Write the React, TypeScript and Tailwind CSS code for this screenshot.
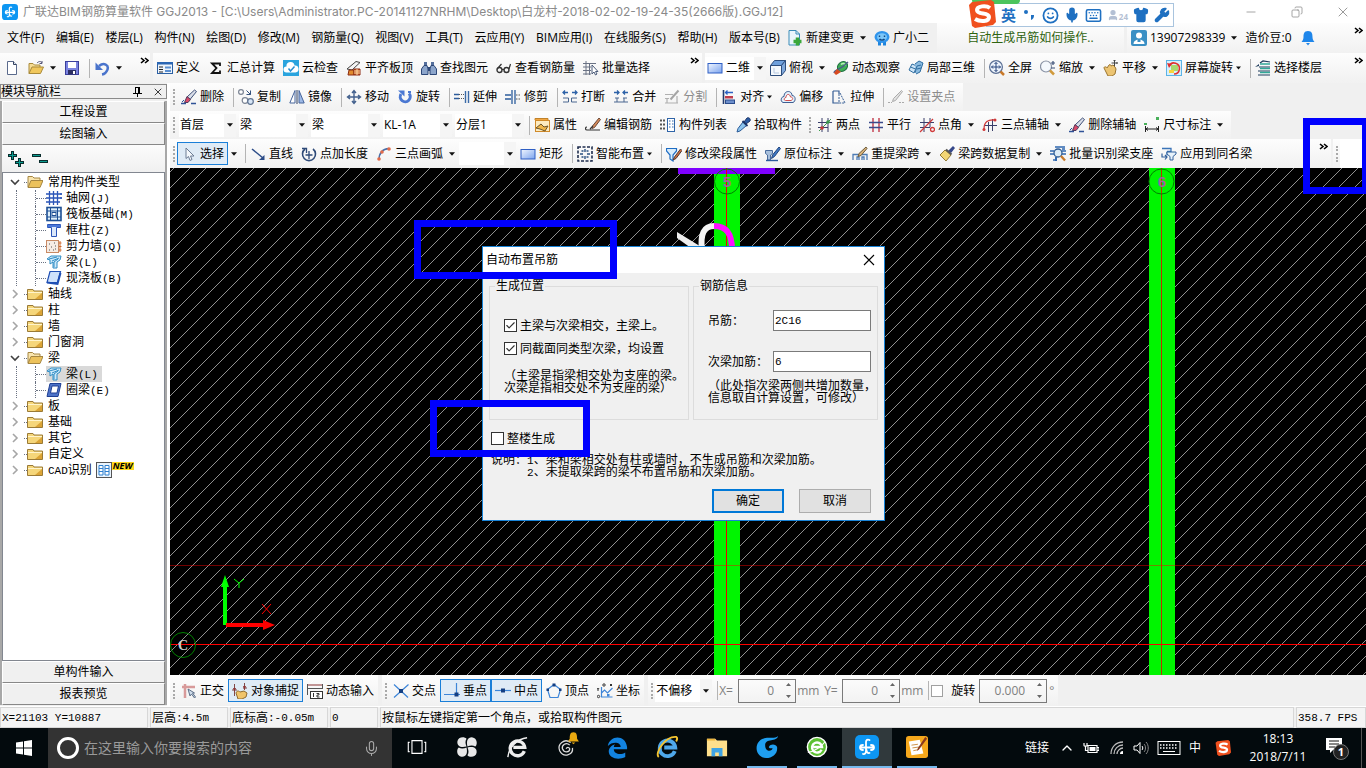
import { Fragment, type ReactNode } from 'react';
import clsx from 'clsx';
import { Check, Minus, Copy, X, Smile, Mic, Keyboard, Shirt, Wrench, User, ChevronUp } from 'lucide-react';

const icons: Record<string, ReactNode> = {
  newDoc: (
    <>
      <path d="M3.5 1.5h6l3 3v10h-9z" fill="#fff" stroke="#5a6a8c" />
      <path d="M9.5 1.5v3h3" fill="#dfe6f2" stroke="#34425f" />
    </>
  ),
  open: (
    <>
      <path d="M1 13.5V3.5h4l1.5 1.5H12v2" fill="#f6dc94" stroke="#a98a3a" />
      <path d="M1 13.5 4 7h11.5l-3 6.5z" fill="#f0c75c" stroke="#a98a3a" />
      <path d="M9 3c2-2 4-2 5 0M14 1v2.5h-2.5" fill="none" stroke="#557" />
    </>
  ),
  save: (
    <>
      <rect x="1.5" y="1.5" width="13" height="13" fill="#7b83e0" stroke="#3a3f9c" />
      <rect x="4" y="2" width="8" height="6" fill="#fff" />
      <rect x="4" y="10" width="8" height="4.5" fill="#2d2f63" />
      <rect x="9" y="11" width="2" height="3" fill="#fff" />
    </>
  ),
  undo: (
    <>
      <path d="M5 6c5-4 10-1 8.5 3.5C12.5 12 11 14 8 14.5" fill="none" stroke="#4a74cc" strokeWidth="2.5" />
      <path d="M1.5 2.5v7.5h7.5z" fill="#4a74cc" />
    </>
  ),
  define: (
    <>
      <rect x=".5" y="2.5" width="15" height="11" fill="#eef4fb" stroke="#2a5fa3" />
      <rect x="0" y="2" width="16" height="2.5" fill="#2a66b4" />
      <path d="M2 7h4M2 9.5h4M2 12h4" stroke="#222" />
      <path d="M8 7.5h6M8 11h6" stroke="#5b8fd0" strokeWidth="2" />
    </>
  ),
  sigma: <path d="M12 6V3.5H4L8.500 8 4 13h8v-2.500" fill="none" stroke="#111" strokeWidth="1.8" />,
  cloud: (
    <>
      <rect width="16" height="16" fill="#2aa4de" />
      <path d="M3.500 12.500a3 3 0 0 1 0-6 4 4 0 0 1 8-1 3.500 3.500 0 0 1 1 7z" fill="#fff" />
      <path d="m5.5 8.5 2 2.500 4-4.500" fill="none" stroke="#2a8fd0" strokeWidth="1.5" />
    </>
  ),
  alignTop: (
    <>
      <path d="M1 9 10 1.5l4 1L6 10z" fill="#f4f4f4" stroke="#444" />
      <path d="M3 10h5v5H2z" fill="#e08a2c" stroke="#8b2b12" />
      <path d="M8 9h6v6H8z" fill="#c65a2c" stroke="#8b2b12" />
      <path d="M8 11h6M8 13h6M11 9v6" stroke="#ffd9a0" />
    </>
  ),
  binoculars: (
    <>
      <path d="M3 2h3v4H3zM10 2h3v4h-3z" fill="#556f9c" />
      <path d="M.5 14.500V9L3 5.500h3L7 9v5.500zM9 14.500V9l1-3.500h3L15.500 9v5.500z" fill="#8ca5cb" stroke="#2d4777" />
      <path d="M7 7h2v4H7z" fill="#2d4777" />
    </>
  ),
  glasses: (
    <>
      <circle cx="3.5" cy="10" r="2.5" fill="none" stroke="#333" strokeWidth="1.4" />
      <circle cx="10.500" cy="10" r="2.5" fill="none" stroke="#333" strokeWidth="1.4" />
      <path d="M6 9.500h2M2 8l3.500-4M13 9l1.500-5" stroke="#333" strokeWidth="1.2" />
    </>
  ),
  batch: (
    <>
      <path d="M0 3.500h13M0 7h8M0 10.500h8M0 14h8M3 1v14M6.500 4v11" stroke="#6a7284" />
      <path d="M9 5v9l2-2 1.500 3 1.500-1-1.500-2.500H15z" fill="#fff" stroke="#4a5a78" />
    </>
  ),
  rect: (
    <>
      <defs>
        <linearGradient id="rectFill" x1="0" y1="0" x2="1" y2="1">
          <stop offset="0" stopColor="#f2f7ff" />
          <stop offset="1" stopColor="#7ba3ee" />
        </linearGradient>
      </defs>
      <rect x="1" y="3.500" width="14" height="9.500" fill="url(#rectFill)" stroke="#2f5fc4" />
    </>
  ),
  cube: (
    <>
      <path d="M.5 5.500 4.500.5h11l-4 5z" fill="#6fa0dc" stroke="#2d4d7c" />
      <path d="M.5 5.500h11v10h-11z" fill="#f4f8fc" stroke="#2d4d7c" />
      <path d="m11.500 5.500 4-5v10l-4 5z" fill="#7fa8dc" stroke="#2d4d7c" />
      <path d="M4 8v5h5" stroke="#b6c8e0" fill="none" />
    </>
  ),
  orbit: (
    <>
      <ellipse cx="9.500" cy="6.500" rx="5.500" ry="4.500" fill="#3fae57" stroke="#1f7040" transform="rotate(-40 9.5 6.5)" />
      <path d="M8 4.500c2-2 4-1 4 1" stroke="#b8f0b8" fill="none" strokeWidth="1.5" />
      <path d="M1 13c0-4 6-2 14-11" fill="none" stroke="#4b5a8a" strokeWidth="1.2" />
      <path d="m4 9 4 3-5 3-2-2z" fill="#d84a20" />
    </>
  ),
  local3d: (
    <>
      <path d="m1 10 3-6 5 2-3 7z" fill="#cfe5f7" stroke="#2e6da0" />
      <path d="m7 4 4-3 4 2-3 9-4 2" fill="#8bbbe0" stroke="#2e6da0" />
      <path d="m2.500 7 5 2M9 6l4-1M9 9l4-1M9 6l-2 7" stroke="#2e6da0" fill="none" />
    </>
  ),
  fullView: (
    <>
      <circle cx="7" cy="7" r="6.400" fill="#edf3fb" stroke="#5a6f94" strokeWidth="1.2" />
      <path d="M7 2.500v9M2.500 7h9M5.500 4 7 2.500 8.500 4M5.500 10 7 11.500 8.500 10M4 5.500 2.500 7 4 8.500M10 5.500 11.500 7 10 8.500" stroke="#27447c" fill="none" />
      <path d="m11.500 11.500 3.500 3.500" stroke="#c8792a" strokeWidth="2.5" />
    </>
  ),
  zoomView: (
    <>
      <circle cx="6" cy="6.500" r="5.500" fill="#f4f8fd" stroke="#8a93a5" strokeWidth="1.2" />
      <path d="m10 10.500 4 4" stroke="#d09a3c" strokeWidth="2.5" />
      <path d="M11 3h4M13 1v4M11 8h4" stroke="#3b4f76" strokeWidth="1.2" />
    </>
  ),
  pan: (
    <>
      <path d="M1 8c0-2 3-1 3 0l2-3c1-1 2 0 2 1l2-1 1 1 1 1 1 2-1 5-3 2H5z" fill="#ecc472" stroke="#9a7430" />
      <path d="M11.500 0v6M8.500 3h6M10.500 1l1-1 1 1M13.500 2l1 1-1 1" stroke="#444" fill="none" />
    </>
  ),
  spin: (
    <>
      <rect x=".5" y=".5" width="15" height="15" fill="#d8effb" stroke="#5bb4e6" />
      <rect x="5" y="5" width="7" height="6" fill="#a9d86e" />
      <path d="M3 6a5.500 5.500 0 1 1 5 8" fill="none" stroke="#e03030" strokeWidth="1.6" />
      <path d="m1 3 2 5 3-4z" fill="#e03030" />
      <path d="M3 10h5v3H3z" fill="#f7d33c" />
    </>
  ),
  floors: (
    <>
      <path d="M5 3 8 1l7 1M4 7h11M3 11h12M3 15h12" stroke="#1f3c5c" fill="none" strokeWidth="1.2" />
      <path d="M5 4h10M5 8.500h10M5 12.500h10" stroke="#31a898" strokeWidth="1.6" />
      <path d="m0 7 4-3v2" fill="#1f3c5c" />
    </>
  ),
  brush: (
    <>
      <path d="m13.500 1 2 1.500-6.500 8-3-2.500z" fill="#d9dde8" stroke="#3f5078" />
      <path d="m6 7.500 3.500 3-2.500 3H3.500z" fill="#d9496a" stroke="#503a5c" />
      <path d="M0 14.500h5M10 14.500h5" stroke="#2f5297" strokeWidth="1.6" />
      <path d="m1 13 2-2" stroke="#2f5297" />
    </>
  ),
  copy: (
    <>
      <circle cx="3" cy="3" r="2.400" fill="#fff" stroke="#7b8494" strokeWidth="1.2" />
      <circle cx="7" cy="11.500" r="2.800" fill="#fff" stroke="#7b8494" strokeWidth="1.2" />
      <circle cx="12.500" cy="12.500" r="2.800" fill="#d8e6f6" stroke="#5d7290" strokeWidth="1.2" />
      <path d="m8.500 1.500 4 4m0-4v4h-4" fill="none" stroke="#33507c" />
    </>
  ),
  mirror: (
    <>
      <path d="M6 1.500v12.500H.8z" fill="#fff" stroke="#46649a" />
      <path d="M10 1.500v12.500h5.200z" fill="#9db9e6" stroke="#46649a" />
      <path d="M8 1v14" stroke="#2c3f60" />
    </>
  ),
  move: <path d="M8 2v12M2 8h12M6 4l2-2.500L10 4M6 12l2 2.500 2-2.500M4 6 1.500 8 4 10M12 6l2.500 2-2.500 2" stroke="#44618e" fill="none" strokeWidth="1.4" />,
  rotate: (
    <>
      <path d="M4 5a5 5 0 1 0 8-.5" fill="none" stroke="#4b78d2" strokeWidth="3" />
      <path d="M1 1.500h6.500v6z" fill="#4b78d2" />
      <path d="M11 3h3" stroke="#4b78d2" strokeWidth="2" />
    </>
  ),
  extend: (
    <>
      <path d="M0 5.500h5M0 9.500h5" stroke="#2c5c9c" strokeWidth="1.4" />
      <path d="M5 5.500h5M5 9.500h5" stroke="#555" strokeDasharray="1 1" />
      <path d="M11.500 2v12M14.500 2v12" stroke="#3b6ba8" strokeWidth="1.4" />
    </>
  ),
  trim: (
    <>
      <path d="M0 6h6M0 10h6M7 1v14M10 1v14" stroke="#2c5c9c" strokeWidth="1.3" />
      <path d="M11 6h5M11 10h5" stroke="#555" strokeDasharray="1.5 1" />
    </>
  ),
  breakIt: (
    <>
      <path d="M1 3.500h5M10 3.500h5M3 1.500l-2 2 2 2M13 1.500l2 2-2 2" stroke="#2d62a8" fill="none" strokeWidth="1.3" />
      <path d="M1 9h5.500v4H1M15 9H9.500v4H15" stroke="#4a6790" fill="none" />
    </>
  ),
  join: (
    <>
      <path d="M1 3.500h5M10 3.500h5M4 1.500l2 2-2 2M12 1.500l-2 2 2 2" stroke="#2d62a8" fill="none" strokeWidth="1.3" />
      <path d="M2 9h4M10 9h4M1 13h14M4 9v4M11 9v4" stroke="#4a6790" />
    </>
  ),
  split: (
    <>
      <path d="M1 5.500h8M1 9.500h4M1 14h13M3 9v5M13 7v7" stroke="#b0b0b0" fill="none" strokeWidth="1.2" />
      <path d="m14.500 1.500-8 9" stroke="#a5a5a5" strokeWidth="2" />
    </>
  ),
  alignTo: (
    <>
      <path d="M2.500 1v14" stroke="#223a6c" strokeWidth="1.6" />
      <path d="M4.500 3.500H12M6.500 1.500l-2 2 2 2" stroke="#2d62c4" fill="none" strokeWidth="1.3" />
      <rect x="4" y="7" width="8" height="2.500" fill="#c03c4c" />
      <rect x="4.500" y="11" width="9" height="3.500" fill="#6d8fcc" stroke="#2b4c8c" />
    </>
  ),
  offset: (
    <>
      <path d="M3 13.500c-3-1-2-6 1-6C4 1 12 1 12 6.500c4 0 4 6 1 7z" fill="#e3f0fb" stroke="#3d5e92" />
      <path d="M5.500 11.500c-2 0-1.500-3 .5-3 0-4 4-4 4.500-.5 3 0 2.500 3 .5 3.500z" fill="#fff" stroke="#d05050" />
    </>
  ),
  stretch: (
    <>
      <path d="M2 2h6v3M2 2v12h6" stroke="#345c94" fill="none" strokeWidth="1.2" />
      <path d="M8 5v9M9 4l5 10H8" stroke="#345c94" fill="none" strokeDasharray="2 1" />
    </>
  ),
  grip: (
    <>
      <path d="M0 13.500h4M11 13.500h5" stroke="#aaa" strokeDasharray="2 1" />
      <path d="m13.500 1.500 1 1-7 9-3 1 1-3z" fill="#e2e2e2" stroke="#aaa" />
    </>
  ),
  props: (
    <>
      <rect x="1.500" y="3.500" width="14" height="11" fill="#fdebc0" stroke="#d08a2a" />
      <path d="M1 3V1.500h13V3" fill="#f2a641" stroke="#c0822a" />
      <path d="m2 11 5-4 3 3 4-1-3 5-5-2z" fill="#f0b64a" stroke="#6b5428" />
    </>
  ),
  editBar: (
    <>
      <path d="m14 1 1.500 1.500-6 8-2.500 1 .5-2.500z" fill="#d58a5a" stroke="#6b4a3a" />
      <path d="M2 10c-2 0-2 3 0 3h13M5 12l3-3" stroke="#333" fill="none" strokeWidth="1.2" />
    </>
  ),
  list: (
    <>
      <path d="M0 3.500h5M0 7.500h5M0 11.500h5" stroke="#555" strokeWidth="2" strokeDasharray="2 1" />
      <rect x="7.500" y="1.500" width="7" height="13" fill="#fff" stroke="#2f64a8" />
      <path d="M9 4h1.500M9 7h1.500M9 10h1.500M12 4h1.500M12 7h1.500M12 10h1.500" stroke="#2f64a8" />
    </>
  ),
  picker: (
    <>
      <path d="m9 5 3-4c2-1 4 1 3 3l-4 3z" fill="#2c5ca4" stroke="#1c3568" />
      <path d="m8 5 3.500 3.500L5 14l-3 1 1-3.500z" fill="#8cc4ee" stroke="#2b5b98" />
      <path d="m7.500 4 5 5" stroke="#1c3568" strokeWidth="1.8" />
    </>
  ),
  twoPoint: (
    <>
      <path d="M5 1v14M11 1v14M1 5.500h14M1 10.500h10" stroke="#3a3f6a" />
      <path d="m2 14 12-12" stroke="#3a9a4a" />
      <circle cx="11" cy="5" r="1.8" fill="#3a9a4a" />
      <circle cx="5" cy="11" r="1.8" fill="#c23a3a" />
    </>
  ),
  parallel: (
    <>
      <path d="M5 1v14M11 1v14" stroke="#c23a4a" strokeWidth="1.4" />
      <path d="M1 5.500h14M1 10.500h14" stroke="#3a4a8a" strokeWidth="1.4" />
    </>
  ),
  pointAngle: (
    <>
      <path d="M5 1v14M11 1v9M1 5.500h14M1 10.500h10" stroke="#3a3f6a" />
      <path d="m1 15 13-13" stroke="#d03a3a" strokeWidth="1.2" />
      <circle cx="13.500" cy="12.500" r="2" fill="none" stroke="#d03a3a" strokeWidth="1.3" />
    </>
  ),
  threePointAxis: (
    <>
      <path d="M6.500 5v10M10.500 2v12M3 8.500h12" stroke="#3a3f6a" />
      <path d="M2 12C2 5 6 2 13 3" stroke="#d03a3a" fill="none" strokeWidth="1.3" />
      <circle cx="2" cy="12.500" r="1.5" fill="#d03a3a" />
      <circle cx="13" cy="3" r="1.5" fill="#d03a3a" />
    </>
  ),
  dimension: (
    <>
      <path d="M1.500 9v6M14.500 9v6M2 12h12M4 10.500 2 12l2 1.500M12 10.500l2 1.500-2 1.500" stroke="#222" fill="none" />
      <rect x="12" y="0" width="3" height="3" fill="#49b05a" />
      <rect x="0" y="6" width="3" height="2" fill="#49b05a" />
    </>
  ),
  cursor: <path d="M5 2v10.500l2.500-2 1.500 4 2-1-1.500-3.500H13z" fill="#f4f8fc" stroke="#6c7c94" />,
  line: (
    <>
      <path d="m2 3 11 9" stroke="#2c4c88" strokeWidth="1.5" />
      <path d="M14.500 9v5H9z" fill="#2c4c88" />
    </>
  ),
  pointLength: (
    <>
      <path d="M4 3a6.500 6.500 0 1 0 8 0" fill="none" stroke="#2e4a78" strokeWidth="1.6" />
      <path d="M1 2.500h4.500V7M8 5v8M4.500 9h7" stroke="#2e4a78" fill="none" strokeWidth="1.3" />
    </>
  ),
  arc: (
    <>
      <path d="M3 14C3 7 6 3 13 2.500" stroke="#4b6fa8" fill="none" strokeWidth="1.5" />
      <circle cx="3" cy="13" r="1.8" fill="#e26b4a" />
      <circle cx="6" cy="6" r="1.8" fill="#e26b4a" />
      <circle cx="13" cy="3" r="1.8" fill="#e26b4a" />
    </>
  ),
  smart: (
    <>
      <rect x="1" y="1" width="14" height="14" fill="none" stroke="#1f2d4d" strokeWidth="1.6" strokeDasharray="3 1.5" />
      <path d="M8 3v3M8 10v3M3 8h3M10 8h3M4.500 5h2M9.500 11h2M4.500 11h2M9.500 5h2" stroke="#2a5080" strokeWidth="1.4" />
    </>
  ),
  beamEdit: (
    <>
      <path d="M.5 2.500h10v2.500L7 9v6l-3-2V9L.5 5z" fill="#d8ecfb" stroke="#1e6dc4" strokeWidth="1.2" />
      <path d="m14.500 3-6 8-1.500 3 3-1.500 6-8z" fill="#d0703c" stroke="#4b3a3a" />
    </>
  ),
  inPlace: (
    <>
      <path d="M.5 4.500h7v3L5.500 9v5h-3V9L.5 7.500z" fill="#a9c0dc" stroke="#4a6c9c" />
      <path d="m14 1 1.500 1.500-6 8-3 2 1-3.500z" fill="#3f78c4" stroke="#22447c" />
      <path d="M1 14.500h12" stroke="#2d5a9c" strokeWidth="1.4" />
    </>
  ),
  respan: (
    <>
      <path d="M1 14V8.500h14V14M5 14v-3h2v3M10 14v-3h2v3" fill="none" stroke="#4d7bb4" strokeWidth="1.3" />
      <path d="m14 1 1 1.500-6 7-3 1 1-3z" fill="#d9b27a" stroke="#6b5a3a" />
    </>
  ),
  spanCopy: (
    <>
      <path d="m14 0 2 2-4 5-3-2z" fill="#36488a" />
      <path d="m6 4 6 5-5 6-6-6z" fill="#f2d675" stroke="#927a35" />
      <path d="m7 3.500 5.500 5" stroke="#555" strokeWidth="2" />
    </>
  ),
  recognise: (
    <>
      <path d="M0 5h4M0 8h4M5 1h10M12 5h4M12 8h4M3 14h2M12 3h3" stroke="#2f68b0" strokeWidth="1.4" />
      <circle cx="8" cy="7" r="4" fill="#dcecf8" stroke="#2f5c94" strokeWidth="1.3" />
      <path d="m11 10 4 4.500" stroke="#c8792a" strokeWidth="2.3" />
      <path d="M6 11v4" stroke="#2f68b0" strokeWidth="2" />
    </>
  ),
  applyBeam: (
    <>
      <path d="M1 2.500h9v3H6M6 5.500v4" fill="none" stroke="#3b74b8" strokeWidth="1.3" />
      <path d="M6 6h9v2l-3 2.500V14H9v-3.500L6 8z" fill="#e7f2fb" stroke="#33619c" />
      <path d="M1 7.500v3.500h5m-2-2 2 2-2 2.500" fill="none" stroke="#33619c" strokeWidth="1.2" />
    </>
  ),
  newChange: (
    <>
      <path d="M2 .5h7l3.500 3.500v11H2z" fill="#eaf6fc" stroke="#3a8cb8" />
      <path d="M9 .5V4h3.500" fill="none" stroke="#3a8cb8" />
      <path d="M10.500 7.500v8M6.500 11.500h8" stroke="#3aa83a" strokeWidth="3.5" />
    </>
  ),
  mascot: (
    <>
      <path d="M4 11h3v4.500H4zM9 11h3v4.500H9z" fill="#1f84dc" />
      <ellipse cx="8" cy="7" rx="7.500" ry="6" fill="#2f94ec" />
      <ellipse cx="8" cy="7" rx="5" ry="3.800" fill="#7cc6f8" />
      <path d="M5.500 5.500v1.500M10.500 5.500v1.500M5.500 9c1 1.500 4 1.500 5 0" stroke="#0d4684" fill="none" strokeWidth="1.4" />
    </>
  ),
  account: (
    <>
      <rect width="16" height="16" rx="2" fill="#3a8fc4" />
      <circle cx="8" cy="5.500" r="3" fill="#fff" />
      <path d="M2.500 14c0-6 11-6 11 0z" fill="#fff" />
      <path d="M6.500 9h3v3h-3z" fill="#3a8fc4" />
    </>
  ),
  bell: (
    <>
      <path d="M8 1c4 0 4.500 3 4.500 6 0 2 .5 3 2 5h-13c1.500-2 2-3 2-5 0-3 .5-6 4.500-6z" fill="#1f86ea" />
      <path d="M6 13h4l-2 2.500z" fill="#1f86ea" />
    </>
  ),
  ortho: (
    <>
      <path d="M4 1v14M1 4h13" stroke="#d89a9a" strokeWidth="2.5" />
      <path d="m7 6 2 7 1.500-2 3 4 1-1-3-4h2z" fill="#cfdcea" stroke="#5d6f88" />
    </>
  ),
  snap: (
    <>
      <path d="M0 7h5M2.500 1v12M12.500 0v7M11 5h4" stroke="#804848" />
      <path d="M2.500 9 1 5h3zM12.500 7 11 3h3z" fill="#8c3434" />
      <path d="M4 10c1-3 3-2 4-1l4-1 3 2-1 4-4 2H6z" fill="#f0c46a" stroke="#8f6a2c" />
    </>
  ),
  dynInput: (
    <>
      <path d="M0 2h16" stroke="#a46060" strokeWidth="1.3" />
      <path d="M.5 1v11M15.500 1v5M0 5.500h15" stroke="#555" />
      <rect x="3.500" y="8.500" width="12" height="7" fill="#fff" stroke="#333" />
      <path d="M6.500 10v4M9.500 10.500H12V12h-2v2h2.500" stroke="#333" fill="none" />
    </>
  ),
  cross: (
    <>
      <path d="m1 1.500 14 13M15.500 1.500 1 14.500" stroke="#3d85d8" strokeWidth="1.2" />
      <rect x="6" y="6" width="4" height="4" fill="#143f82" />
    </>
  ),
  perp: (
    <>
      <path d="M0 11.500h16M12.500 0v12" stroke="#3d85d8" strokeWidth="1.2" />
      <rect x="10.500" y="9.500" width="4" height="4" fill="#143f82" />
    </>
  ),
  mid: (
    <>
      <path d="M0 7.500h16" stroke="#3d85d8" strokeWidth="1.2" />
      <rect x="6" y="5.500" width="4" height="4" fill="#143f82" />
    </>
  ),
  vertex: (
    <>
      <path d="m8 1.500 6.500 5-2.500 8H4l-2.500-8z" fill="none" stroke="#3d85d8" strokeWidth="1.2" />
      <path d="M6.500.5h3v3h-3zM.5 5.500H3V8H.5zM13 5.500h2.500V8H13z" fill="#143f82" />
    </>
  ),
  coord: (
    <>
      <path d="M4.500 4v10h11M4.500 10l3-3 3 3 5-5" stroke="#3d85d8" fill="none" strokeWidth="1.2" />
      <path d="m0 5 1 1.500L2 5M1 6.500V8M13 1l2 2M15 1l-2 2" stroke="#333" fill="none" />
      <circle cx="7" cy="2" r="1.2" fill="none" stroke="#333" />
      <circle cx="1.500" cy="13.500" r="1.2" fill="none" stroke="#333" />
      <rect x="10" y="11" width="2.500" height="2.500" fill="#3d85d8" />
    </>
  ),
  folder: (
    <>
      <path d="M.5 13.500v-10h5.500L7 5h8.500v8.500z" fill="#f5d67a" stroke="#9a7a36" />
      <path d="M1 6.500h14" stroke="#fff4cc" />
      <path d="M8 13h7V7z" fill="#dba436" />
    </>
  ),
  folderOpen: (
    <>
      <path d="M1 13V2.500h4.500L7 4h6v3" fill="#f9e5ae" stroke="#a58642" />
      <path d="M1 13.500 4 6.500h12L13 13.500z" fill="#ecc25c" stroke="#a58642" />
    </>
  ),
  gridAxis: <path d="M3.500 1v14M7.500 1v14M11.500 1v14M0 4h16M0 8h16M0 12h14M15 3v2M15 7v2" stroke="#2b55b8" strokeWidth="1.3" />,
  raft: (
    <>
      <rect x="1" y="1.500" width="14" height="13" fill="#dff0fb" stroke="#1d4f94" strokeWidth="1.6" />
      <path d="M4.500 2v12M11.500 2v12M1 5h14M1 11h14" stroke="#1d4f94" />
      <rect x="6" y="6.500" width="4" height="3" fill="#fff" stroke="#1d4f94" />
    </>
  ),
  column: (
    <>
      <path d="M1.500 2.500h13v3h-4v9h-5v-9h-4z" fill="#dbe8fa" stroke="#2b55b8" />
      <path d="M1.500 3h13v2h-13z" fill="#4b78d8" />
    </>
  ),
  shearWall: (
    <>
      <rect x=".5" y="2.500" width="12" height="12" fill="#f6ece4" stroke="#c88a64" />
      <path d="M3 6h1M8 5h1M5 9h1M9 8h1M3 12h1M7 12h1M9 11h1" stroke="#555" strokeWidth="1.2" />
      <path d="M14 3v11M13 5h2.500M13 8.500h2.500M13 12h2.500" stroke="#d06a2c" />
    </>
  ),
  beam: (
    <>
      <path d="m1 5 4-3h10l-1 4-3 2v6H7V8l-3 2V6z" fill="#cfeafb" stroke="#2f8cc4" />
      <path d="m3 5 8-2M6 7l7-3M8 13V8l4-3" stroke="#2f8cc4" fill="none" />
    </>
  ),
  slab: (
    <>
      <path d="M4 1.500h10.500l-3 11H1z" fill="#cfe2fb" stroke="#1f4fb4" strokeWidth="1.2" />
      <path d="m1 12.500 10.500 1.500 3-11" fill="none" stroke="#1f4fb4" strokeWidth="2" />
    </>
  ),
  ringBeam: (
    <>
      <path d="M4 1.500h11l-3 13H1z" fill="#4d73c8" stroke="#1f3f94" />
      <path d="M6 4h6.500l-1.500 7H4.500z" fill="#fff" stroke="#1f3f94" />
    </>
  ),
  cad: (
    <>
      <rect x=".5" y=".5" width="15" height="15" fill="#eaf4fd" stroke="#555" />
      <path d="M3 3.500h4v9.500H3zM9 3.500h4v9.500H9zM3 6.500h4M9 6.500h4M3 9.500h4M9 9.500h4" fill="#fff" stroke="#2f80d0" />
    </>
  ),
};

function Icon({ name, className }: { name: string; className?: string }) {
  return (
    <svg viewBox="0 0 16 16" className={clsx('size-4 shrink-0', className)} aria-hidden="true">
      {icons[name]}
    </svg>
  );
}

function Caret({ className = 'w-1.5' }: { className?: string }) {
  return (
    <svg viewBox="0 0 7 4" className={clsx('h-1 shrink-0', className)} aria-hidden="true">
      <path d="M0 0h7L3.500 4z" fill="#111" />
    </svg>
  );
}

type Tool = {
  icon: string;
  label?: string;
  arrow?: 'wide' | 'tight';
  sep?: boolean;
  active?: boolean;
  disabled?: boolean;
};

const fileTools: Tool[] = [
  { icon: 'newDoc' },
  { icon: 'open', arrow: 'wide' },
  { icon: 'save' },
  { icon: 'undo', arrow: 'wide', sep: true },
];

const modelTools: Tool[] = [
  { icon: 'define', label: '定义' },
  { icon: 'sigma', label: '汇总计算' },
  { icon: 'cloud', label: '云检查' },
  { icon: 'alignTop', label: '平齐板顶' },
  { icon: 'binoculars', label: '查找图元' },
  { icon: 'glasses', label: '查看钢筋量' },
  { icon: 'batch', label: '批量选择' },
];

const viewTools: Tool[] = [
  { icon: 'cube', label: '俯视', arrow: 'wide' },
  { icon: 'orbit', label: '动态观察' },
  { icon: 'local3d', label: '局部三维' },
  { icon: 'fullView', label: '全屏', sep: true },
  { icon: 'zoomView', label: '缩放', arrow: 'wide' },
  { icon: 'pan', label: '平移', arrow: 'wide' },
  { icon: 'spin', label: '屏幕旋转', arrow: 'tight' },
  { icon: 'floors', label: '选择楼层', sep: true },
];

const editTools: Tool[] = [
  { icon: 'brush', label: '删除' },
  { icon: 'copy', label: '复制', sep: true },
  { icon: 'mirror', label: '镜像' },
  { icon: 'move', label: '移动', sep: true },
  { icon: 'rotate', label: '旋转' },
  { icon: 'extend', label: '延伸', sep: true },
  { icon: 'trim', label: '修剪' },
  { icon: 'breakIt', label: '打断', sep: true },
  { icon: 'join', label: '合并' },
  { icon: 'split', label: '分割', disabled: true },
  { icon: 'alignTo', label: '对齐', arrow: 'tight', sep: true },
  { icon: 'offset', label: '偏移' },
  { icon: 'stretch', label: '拉伸' },
  { icon: 'grip', label: '设置夹点', sep: true, disabled: true },
];

const memberTools: Tool[] = [
  { icon: 'props', label: '属性', sep: true },
  { icon: 'editBar', label: '编辑钢筋' },
  { icon: 'list', label: '构件列表' },
  { icon: 'picker', label: '拾取构件' },
];

const axisTools: Tool[] = [
  { icon: 'twoPoint', label: '两点' },
  { icon: 'parallel', label: '平行' },
  { icon: 'pointAngle', label: '点角', arrow: 'wide' },
  { icon: 'threePointAxis', label: '三点辅轴', arrow: 'wide' },
  { icon: 'brush', label: '删除辅轴' },
  { icon: 'dimension', label: '尺寸标注', arrow: 'wide' },
];

const drawTools: Tool[] = [
  { icon: 'line', label: '直线', sep: true },
  { icon: 'pointLength', label: '点加长度' },
  { icon: 'arc', label: '三点画弧', arrow: 'wide' },
];

const beamTools: Tool[] = [
  { icon: 'rect', label: '矩形' },
  { icon: 'smart', label: '智能布置', arrow: 'tight', sep: true },
  { icon: 'beamEdit', label: '修改梁段属性', sep: true },
  { icon: 'inPlace', label: '原位标注', arrow: 'wide' },
  { icon: 'respan', label: '重提梁跨', arrow: 'wide' },
  { icon: 'spanCopy', label: '梁跨数据复制', arrow: 'wide' },
  { icon: 'recognise', label: '批量识别梁支座' },
  { icon: 'applyBeam', label: '应用到同名梁' },
];

const modeTools: Tool[] = [
  { icon: 'ortho', label: '正交' },
  { icon: 'snap', label: '对象捕捉', active: true },
  { icon: 'dynInput', label: '动态输入' },
];

const snapTools: Tool[] = [
  { icon: 'cross', label: '交点' },
  { icon: 'perp', label: '垂点', active: true },
  { icon: 'mid', label: '中点', active: true },
  { icon: 'vertex', label: '顶点' },
  { icon: 'coord', label: '坐标' },
];

const menus = [
  '文件(F)', '编辑(E)', '楼层(L)', '构件(N)', '绘图(D)', '修改(M)', '钢筋量(Q)', '视图(V)',
  '工具(T)', '云应用(Y)', 'BIM应用(I)', '在线服务(S)', '帮助(H)', '版本号(B)',
];

function Separator() {
  return <span className="ml-[5px] h-[19px] w-px shrink-0 bg-[#b4b4b4]" />;
}

function Tools({ items }: { items: Tool[] }) {
  return items.map((tool) => (
    <Fragment key={tool.icon}>
      {tool.sep && <Separator />}
      <button
        type="button"
        disabled={tool.disabled}
        className={clsx(
          'flex h-[23px] shrink-0 items-center gap-[3px] px-1 whitespace-nowrap',
          tool.active && 'bg-[#dfebf6] outline-1 -outline-offset-1 outline-[#1a7fd8]',
          tool.disabled && 'text-[#8c8c8c]',
        )}
      >
        <Icon name={tool.icon} />
        {tool.label}
        {tool.arrow === 'wide' && <Caret className="ml-[3px] w-1.5" />}
        {tool.arrow === 'tight' && <Caret className="w-[5px]" />}
      </button>
    </Fragment>
  ));
}

function Grip() {
  return <span className="mr-0.5 ml-[3px] h-4 shrink-0 border-l-2 border-dotted border-[#a9a9a9]" />;
}

function Group({ className, children }: { className?: string; children: ReactNode }) {
  return (
    <div className={clsx('flex h-full shrink-0 items-center bg-linear-to-b from-[#fdfdfd] to-[#f1f1f1]', className)}>
      {children}
    </div>
  );
}

function More({ className }: { className?: string }) {
  return (
    <button type="button" aria-label="更多" className={clsx('self-start pt-1', className)}>
      <svg viewBox="0 0 9 8" className="h-2 w-[9px]">
        <path d="m1 1 3 2.500L1 6M5 1l3 2.500L5 6" fill="none" stroke="#000" strokeWidth="1.6" />
      </svg>
    </button>
  );
}

function Combo({ label, value, icon, className }: { label: string; value: string; icon?: string; className: string }) {
  return (
    <label className={clsx('flex h-[23px] shrink-0 items-center bg-white', className)}>
      {icon && <Icon name={icon} className="mx-0.5" />}
      <select aria-label={label} defaultValue={value} className="min-w-0 flex-1 appearance-none pl-px outline-none">
        <option>{value}</option>
      </select>
      <span className="pointer-events-none flex h-full w-3 shrink-0 items-center justify-center bg-[#f5f5f5]">
        <Caret />
      </span>
    </label>
  );
}

function Spin({ label, value, className }: { label: string; value: string; className: string }) {
  return (
    <div className={clsx('flex h-6 shrink-0 items-center border border-[#7a7a7a] pr-1 text-[#808080]', className)}>
      <input aria-label={label} defaultValue={value} disabled className="min-w-0 flex-1 text-right" />
      <svg viewBox="0 0 5 16" className="ml-3 h-4 w-[5px] shrink-0" aria-hidden="true">
        <path d="m0 3 2.500-3L5 3zM0 12l2.500 3L5 12z" fill="#666" />
      </svg>
    </div>
  );
}

// half-width characters inside the song-style labels
function Lat({ children }: { children: ReactNode }) {
  return <span className="font-['Liberation_Mono',monospace] text-[11px] leading-0">{children}</span>;
}

type TreeNode = { label: string; hotkey?: string; icon?: string; selected?: boolean; children?: TreeNode[] };

const tree: TreeNode[] = [
  {
    label: '常用构件类型',
    children: [
      { label: '轴网', hotkey: '(J)', icon: 'gridAxis' },
      { label: '筏板基础', hotkey: '(M)', icon: 'raft' },
      { label: '框柱', hotkey: '(Z)', icon: 'column' },
      { label: '剪力墙', hotkey: '(Q)', icon: 'shearWall' },
      { label: '梁', hotkey: '(L)', icon: 'beam' },
      { label: '现浇板', hotkey: '(B)', icon: 'slab' },
    ],
  },
  { label: '轴线' },
  { label: '柱' },
  { label: '墙' },
  { label: '门窗洞' },
  {
    label: '梁',
    children: [
      { label: '梁', hotkey: '(L)', icon: 'beam', selected: true },
      { label: '圈梁', hotkey: '(E)', icon: 'ringBeam' },
    ],
  },
  { label: '板' },
  { label: '基础' },
  { label: '其它' },
  { label: '自定义' },
];

function FolderRow({ open, children }: { open?: boolean; children: ReactNode }) {
  return (
    <div className="flex h-4 items-center">
      <svg viewBox="0 0 10 10" className="ml-1.5 size-[10px] shrink-0" aria-hidden="true">
        {open ? (
          <path d="m1 3 4 4 4-4" fill="none" stroke="#404040" strokeWidth="1.6" />
        ) : (
          <path d="m3 1 4 4-4 4" fill="none" stroke="#a6a6a6" strokeWidth="1.6" />
        )}
      </svg>
      <span className="ml-1 w-[3px] border-t border-dotted border-gray-500" />
      <Icon name={open ? 'folderOpen' : 'folder'} />
      <span className="ml-[5px] flex items-center whitespace-nowrap">{children}</span>
    </div>
  );
}

function Sidebar() {
  return (
    <aside className="flex w-[170px] shrink-0 flex-col border-r-3 border-white bg-[#f0f0f0] pb-px">
      <div className="mt-px flex h-[15px] items-center border border-[#8a8a8a]">
        <span className="flex-1 leading-[13px]">模块导航栏</span>
        <button type="button" aria-label="固定" className="mr-2.5">
          <svg viewBox="0 0 9 10" className="h-2.5 w-[9px]">
            <path d="M2.500 0v6M2 .5h5M0 6.500h9M4.500 6v4" fill="none" stroke="#000" />
            <path d="M6 0v6" stroke="#000" strokeWidth="2" />
          </svg>
        </button>
        <button type="button" aria-label="关闭" className="mr-0.5">
          <X className="size-3" strokeWidth={1.5} />
        </button>
      </div>
      <div className="mt-0.5 flex flex-1 flex-col border-x-2 border-[#a8a8a8]">
        <PanelButton>工程设置</PanelButton>
        <PanelButton>绘图输入</PanelButton>
        <div className="flex h-[27px] items-center gap-2 bg-linear-to-b from-[#fcfcfc] to-[#f0f0f0] pl-1.5">
          <svg viewBox="0 0 16 16" className="size-4" role="img" aria-label="展开">
            <path d="M4.500 0v9M0 4.500h9M11.500 7v9M7 11.500h9" stroke="#0a2c2c" strokeWidth="3" />
            <path d="M4.500 1v7M1 4.500h7M11.500 8v7M8 11.500h7" stroke="#0a9c90" />
          </svg>
          <svg viewBox="0 0 16 16" className="size-4" role="img" aria-label="折叠">
            <path d="M0 4.500h9M7 10.500h9" stroke="#0a2c2c" strokeWidth="3" />
            <path d="M1 4.500h7M8 10.500h7" stroke="#0a9c90" />
          </svg>
        </div>
        <div className="flex-1 border border-[#828790] bg-white pt-px pl-px">
          {tree.map((node) => (
            <Fragment key={node.label}>
              <FolderRow open={!!node.children}>{node.label}</FolderRow>
              {node.children && (
                <div className="ml-3 border-l border-dotted border-gray-500 pl-[18px]">
                  {node.children.map((child) => (
                    <div key={child.label} className="flex h-4 items-center border-l border-dotted border-gray-500">
                      <span className="w-[10px] border-t border-dotted border-gray-500" />
                      <span
                        className={clsx('flex h-4 items-center gap-1 pr-1 whitespace-nowrap', child.selected && 'bg-[#d9d9d9]')}
                      >
                        <Icon name={child.icon!} />
                        <span>
                          {child.label}
                          <Lat>{child.hotkey}</Lat>
                        </span>
                      </span>
                    </div>
                  ))}
                </div>
              )}
            </Fragment>
          ))}
          <FolderRow>
            <span>
              <Lat>CAD</Lat>识别
            </span>
            <Icon name="cad" className="ml-1" />
            <b className="mb-2 bg-[#ffd91c] px-px text-[9px] leading-[8px] italic">NEW</b>
          </FolderRow>
        </div>
        <PanelButton>单构件输入</PanelButton>
        <PanelButton>报表预览</PanelButton>
      </div>
    </aside>
  );
}

function PanelButton({ children }: { children: ReactNode }) {
  return (
    <button
      type="button"
      className="h-[22px] w-full border border-t-white border-r-[#888] border-b-[#888] border-l-white bg-[#f0f0f0]"
    >
      {children}
    </button>
  );
}

function Drawing() {
  return (
    <svg className="absolute inset-0 h-full w-full" aria-label="绘图区">
      <defs>
        <pattern id="hatch" width="16" height="16" patternUnits="userSpaceOnUse">
          <path d="M-1 5 5-1M3 17 17 3" stroke="#b4b4b4" strokeWidth=".8" />
        </pattern>
      </defs>
      <rect width="100%" height="100%" fill="#000" />
      <rect width="100%" height="100%" fill="url(#hatch)" />

      <rect x="544" y="6" width="26" height="100%" fill="#00f500" />
      <rect x="979" width="26" height="100%" fill="#00f500" />
      <rect x="508" width="97" height="6" fill="#7f00ff" />
      <path d="M556.500 0v900" stroke="#f00000" />
      <path d="M991.500 0v900" stroke="#c03000" />
      <path d="M0 397.500h2000" stroke="#f00" strokeOpacity=".45" />
      <path d="M0 476.500h2000" stroke="#f00" />

      <path d="M507 64l26 16h-12l-14-10z" fill="#eee" />
      <path d="M532 82c-2-16 2-24 12-24" fill="none" stroke="#f4f4f4" strokeWidth="6" />
      <path d="M544 58c13 0 18 8 18 24" fill="none" stroke="#ff10ff" strokeWidth="6" />

      <circle cx="557" cy="13.500" r="12.500" fill="none" stroke="#008000" />
      <text x="557" y="19" textAnchor="middle" fill="#a060a0" fontSize="15" fontWeight="700" fontFamily="Liberation Sans">5</text>
      <circle cx="991.500" cy="13.500" r="12.500" fill="none" stroke="#008000" />
      <text x="992" y="19" textAnchor="middle" fill="#a060a0" fontSize="15" fontWeight="700" fontFamily="Liberation Sans">6</text>
      <circle cx="13" cy="477" r="12.500" fill="none" stroke="#008000" />
      <text x="13" y="482" textAnchor="middle" fill="#ccc" fontSize="14" fontWeight="700" fontFamily="Liberation Serif">C</text>

      <path d="M53 457v-38h-2l4-12 4 12h-2v38z" fill="#0f0" />
      <path d="M56 455h37v-3l12 5-12 5v-3H56z" fill="#f00" />
      <path d="m64 411 5 4 5-4M69 415v5" fill="none" stroke="#0f0" />
      <path d="m92 436 9 10M101 436l-9 10" fill="none" stroke="#f00" />
    </svg>
  );
}

function CheckRow({ label, checked, className }: { label: string; checked?: boolean; className?: string }) {
  return (
    <label className={clsx('flex h-[23px] items-center gap-[3px] whitespace-nowrap', className)}>
      <span className="grid size-[13px] shrink-0 [&>*]:[grid-area:1/1]">
        <input type="checkbox" defaultChecked={checked} className="peer size-[13px] appearance-none border border-[#333] bg-white" />
        <Check className="pointer-events-none hidden size-[11px] self-center justify-self-center text-[#333] peer-checked:block" strokeWidth={2.5} />
      </span>
      {label}
    </label>
  );
}

function Dialog() {
  return (
    <section
      role="dialog"
      aria-label="自动布置吊筋"
      className="absolute top-[78px] left-[312px] w-[403px] border border-[#1883d7] bg-[#f0f0f0]"
    >
      <header className="flex h-[26px] items-center justify-between bg-white pr-2 pl-[3px]">
        自动布置吊筋
        <button type="button" aria-label="关闭">
          <svg viewBox="0 0 14 14" className="size-[14px]">
            <path d="m2 2 10 10M12 2 2 12" stroke="#000" strokeWidth="1.1" />
          </svg>
        </button>
      </header>
      <div className="flex gap-1 px-1.5 pt-[5px]">
        <fieldset className="h-[142px] w-[200px] border border-[#dcdcdc] pl-[14px]">
          <legend className="-ml-[9px] px-px leading-4">生成位置</legend>
          <div className="pt-5">
            <CheckRow label="主梁与次梁相交，主梁上。" checked />
            <CheckRow label="同截面同类型次梁，均设置" checked />
            <p className="mt-2.5 leading-3 whitespace-nowrap">
              （主梁是指梁相交处为支座的梁。
              <br />
              次梁是指相交处不为支座的梁）
            </p>
          </div>
        </fieldset>
        <fieldset className="h-[142px] flex-1 border border-[#dcdcdc] pl-[14px]">
          <legend className="-ml-[9px] px-px leading-4">钢筋信息</legend>
          <div className="pt-4">
            <label className="flex h-[21px] items-center">
              <span className="w-[65px]">吊筋：</span>
              <input defaultValue="2C16" className="h-[21px] w-[98px] border border-[#7a7a7a] bg-white px-px font-['Liberation_Mono',monospace] text-[11px] outline-none" />
            </label>
            <label className="mt-5 flex h-[21px] items-center">
              <span className="w-[65px]">次梁加筋：</span>
              <input defaultValue="6" className="h-[21px] w-[98px] border border-[#7a7a7a] bg-white px-px font-['Liberation_Mono',monospace] text-[11px] outline-none" />
            </label>
            <p className="mt-2 leading-3 whitespace-nowrap">
              （此处指次梁两侧共增加数量，
              <br />
              信息取自计算设置，可修改）
            </p>
          </div>
        </fieldset>
      </div>
      <div className="px-2 pb-[7px]">
        <CheckRow label="整楼生成" className="mt-[7px]" />
        <div className="mt-1 flex leading-3">
          <span>说明：</span>
          <p>
            <Lat>1</Lat>、梁和梁相交处有柱或墙时，不生成吊筋和次梁加筋。
            <br />
            <Lat>2</Lat>、未提取梁跨的梁不布置吊筋和次梁加筋。
          </p>
        </div>
        <div className="mt-[11px] flex justify-end gap-[15px] pr-[5px]">
          <button type="button" className="h-6 w-[72px] border-2 border-[#0078d7] bg-[#e1e1e1]">确定</button>
          <button type="button" className="h-6 w-[72px] border border-[#adadad] bg-[#e1e1e1]">取消</button>
        </div>
      </div>
    </section>
  );
}

function SogouLogo({ className }: { className: string }) {
  return (
    <svg viewBox="0 0 28 28" className={className} role="img" aria-label="搜狗">
      <path d="m1 5 3-3L23 0l3 2 2 20-3 3L7 28l-3-2z" fill="#f0501e" />
      <path d="M22 8c-4-3-13-2-13 2 0 5 12 2 12 7 0 5-9 5-14 2" fill="none" stroke="#fff" strokeWidth="4" />
    </svg>
  );
}

function InputMethodBar() {
  return (
    <div className="absolute top-0 left-[968px] flex items-start text-[#1f70c1]">
      <span className="absolute top-0 left-1 h-1 w-12 rounded-b-full bg-[#4cc45c]" />
      <SogouLogo className="z-10 size-7" />
      <div className="mt-[3px] -ml-2.5 flex h-6 w-[188px] items-center justify-between border border-[#a9c4de] bg-white pr-[3px] pl-[14px]">
        <b className="text-[15px]">英</b>
        <svg viewBox="0 0 16 16" className="size-4" aria-hidden="true">
          <circle cx="5" cy="5" r="2" fill="currentColor" />
          <path d="M10 8h3c0 3-1 4-3 5" fill="currentColor" />
        </svg>
        <Smile className="size-[17px]" strokeWidth={2.5} />
        <Mic className="size-4 fill-current" strokeWidth={2.5} />
        <Keyboard className="size-[17px]" strokeWidth={2.2} />
        <span className="flex items-end text-[#b4c0d4]">
          <User className="size-3 fill-current" strokeWidth={2.5} />
          <b className="text-[8px] leading-2">24</b>
        </span>
        <Shirt className="size-4 fill-current" />
        <Wrench className="size-4 fill-current" />
      </div>
    </div>
  );
}

function GgjLogo({ className }: { className: string }) {
  return (
    <svg viewBox="0 0 24 24" className={className} aria-hidden="true">
      <rect width="24" height="24" rx="5" fill="#0d96f2" />
      <path d="M14.500 5c-2-1-3.500 0-3.500 2v9c0 2-1 3.500-3 3M18.500 12.500h-13M8 10c-4 0-4 5 0 5M16 10c4 0 4 5 0 5M11.500 15c0 2 1 3.500 3 3" fill="none" stroke="#fff" strokeWidth="1.8" strokeLinecap="round" />
    </svg>
  );
}

const taskIcons: { name: string; running?: boolean; active?: boolean; art: ReactNode }[] = [
  { name: '任务视图', art: <path d="M6.500 5h11v14h-11zM4 7H2.500v10H4M20 7h1.500v10H20" fill="none" stroke="#fff" strokeWidth="1.2" /> },
  {
    name: '风扇',
    art: (
      <path d="M11.500 11.500C5 13 1 11 1.500 6 2 1 9 0 11.500 3c-2 3-1 6 0 8.500zM12.500 11.500C11 5 13 1 18 1.500 23 2 24 9 21 11.500c-3-2-6-1-8.500 0zM12.500 12.500C19 11 23 13 22.500 18c-.5 5-7.500 6-10 3 2-3 1-6 0-8.500zM11.500 12.500C13 19 11 23 6 22.500 1 22 0 15 3 12.500c3 2 6 1 8.500 0z" fill="#e8e8e8" />
    ),
  },
  {
    name: '浏览器',
    art: (
      <>
        <path d="M20 16.500a8 8 0 1 1 .5-4H8" fill="none" stroke="#eee" strokeWidth="3.6" />
        <path d="M2 23C3 13 12 3 23 2" fill="none" stroke="#eee" strokeWidth="1.6" />
      </>
    ),
  },
  {
    name: '提醒',
    art: (
      <>
        <path d="M16 7c-7-5-15 2-12 9 4 8 15 5 14-3M15 10c-4-4-9 0-8 4 2 5 8 4 8 0-1-2-3-2-4 0" fill="none" stroke="#ddd" strokeWidth="1.4" />
        <path d="M19-4c4 0 4 4 4 7l2 3H13l2-3c0-3 0-7 4-7z" fill="#e8a810" />
        <path d="M17 7h4l-2 2z" fill="#e8a810" />
      </>
    ),
  },
  {
    name: 'Edge',
    art: (
      <path d="M2 11C4-1 21-2 23 12v2.500H8.500c0 5.500 8 6.500 12.500 3.500v5c-8 4-18 1-18-6 0-4 3-7 7-8-1 1-1.500 2-1.500 3H16c0-6-10-6-14-1z" fill="#1283e0" />
    ),
  },
  {
    name: 'Internet Explorer',
    art: (
      <>
        <path d="M20.500 16.500a8.500 8.500 0 1 1 .5-4H9" fill="none" stroke="#4fa8ea" strokeWidth="4.2" />
        <path d="M3 23C-2 19 10 0 22 1c2 1 1 3 0 5" fill="none" stroke="#f4c430" strokeWidth="2" />
      </>
    ),
  },
  {
    name: '文件资源管理器',
    art: (
      <>
        <path d="M1 3h9l2 2h11v17H1z" fill="#ffe08c" />
        <path d="M1 3h9v2H1z" fill="#f0b840" />
        <path d="M6 13h12v9h-4v-4h-4v4H6z" fill="#3fa4e4" />
      </>
    ),
  },
  {
    name: '搜狗浏览器',
    running: true,
    art: <path d="M24 0c-1 7-14 2-14 10 0 8 8 7 8 3-2 1-4 0-4-1 2-4 8-3 9 0 1 7-5 12-12 12C-3 23-3 3 12 2c4-.5 9 1 12-2z" fill="#1f9ff0" />,
  },
  {
    name: '360浏览器',
    running: true,
    art: (
      <>
        <circle cx="12" cy="12" r="10.500" fill="#5cc032" stroke="#fff" strokeWidth="1.6" />
        <path d="M17 15a5.500 5.500 0 1 1 .5-3H8" fill="none" stroke="#fff" strokeWidth="2.6" />
        <path d="M2 18C8 17 17 12 21 6" fill="none" stroke="#fff" strokeWidth="1.2" />
      </>
    ),
  },
  { name: '广联达', running: true, active: true, art: null },
  {
    name: '便笺',
    running: true,
    art: (
      <>
        <rect width="24" height="24" rx="3" fill="#f6a81c" />
        <path d="m3 6 12-2 4 15-13 2z" fill="#fff" />
        <path d="m6 10 7-1M7 13l7-1M8 16l5-1" stroke="#c98a3c" />
        <path d="m21 1 2 2-9 12-2 1 1-3z" fill="#8c3a1c" />
      </>
    ),
  },
];

function Taskbar() {
  return (
    <footer className="flex h-10 shrink-0 bg-[#030a0d] text-white">
      <button type="button" aria-label="开始" className="flex w-12 items-center justify-center">
        <svg viewBox="0 0 16 16" className="size-4">
          <path d="M0 2.500 7 1.500v6H0zM8 1.300 16 0v7.500H8zM0 8.500h7v6l-7-1zM8 8.500h8V16l-8-1.200z" fill="#fff" />
        </svg>
      </button>
      <label className="flex w-[344px] items-center bg-[#333] pr-3 pl-[9px]">
        <span className="size-[22px] shrink-0 rounded-full border-3 border-white" />
        <input aria-label="搜索" placeholder="在这里输入你要搜索的内容" className="min-w-0 flex-1 pl-[5px] text-sm outline-none placeholder:text-[#9a9a9a]" />
        <Mic className="size-[17px] text-[#aaa]" strokeWidth={1.5} />
      </label>
      {taskIcons.map((task) => (
        <button
          key={task.name}
          type="button"
          aria-label={task.name}
          className={clsx('flex w-[50px] items-center justify-center', task.active && 'bg-[#30393c]')}
        >
          <span
            className={clsx(
              'flex h-full items-center justify-center border-b-2',
              task.active ? 'w-full' : 'w-10',
              task.running ? 'border-[#76b9ed]' : 'border-transparent',
            )}
          >
            {task.art ? (
              <svg viewBox="0 0 24 24" className="size-[22px] overflow-visible">{task.art}</svg>
            ) : (
              <GgjLogo className="size-6" />
            )}
          </span>
        </button>
      ))}
      <div className="ml-auto flex items-center text-xs">
        <span>链接</span>
        <ChevronUp className="ml-2.5 size-4" strokeWidth={2} />
        <svg viewBox="0 0 16 16" className="ml-2 size-4" aria-hidden="true">
          <path d="M5 5.500h9v7H5zM14.500 7.500h1.500v3h-1.500M1 3v2.500c0 1 3 1 3 0V3M2.500 6v4.500H5" fill="none" stroke="#fff" strokeWidth="1.2" />
          <path d="M6.500 7h6v4h-6z" fill="#fff" />
        </svg>
        <svg viewBox="0 0 16 16" className="ml-2.5 size-4" aria-hidden="true">
          <path d="M2 14C2 7 7 2 14 2M5 14c0-5 4-9 9-9M8 14c0-3 3-6 6-6" fill="none" stroke="#bbb" strokeWidth="1.3" />
          <path d="M11 14c0-2 1-3 3-3v3z" fill="#fff" />
        </svg>
        <svg viewBox="0 0 16 16" className="ml-2 size-4" aria-hidden="true">
          <path d="M1 6h3l3-3.500v11L4 10H1zM9 6c1 1 1 3 0 4" fill="none" stroke="#fff" />
          <path d="M11 4c2 2 2 6 0 8M13 2c3 3 3 9 0 12" fill="none" stroke="#888" />
        </svg>
        <svg viewBox="0 0 24 14" className="ml-2 h-3.5 w-6" aria-hidden="true">
          <rect x="1" y=".5" width="22" height="13" fill="none" stroke="#fff" />
          <path d="M3 4h18M3 7h18" stroke="#fff" strokeWidth="1.5" strokeDasharray="1.5 1.5" />
          <path d="M6 10.500h12" stroke="#fff" />
        </svg>
        <span className="ml-2">中</span>
        <SogouLogo className="ml-3.5 size-4" />
        <time className="ml-3 w-[70px] text-center leading-[18px]">
          18:13
          <br />
          2018/7/11
        </time>
        <button type="button" aria-label="通知" className="mx-3 flex items-end">
          <svg viewBox="0 0 24 24" className="size-6">
            <path d="M1 2h16v12H8l-3 3v-3H1z" fill="#fff" />
            <path d="M4 5h10M4 8h10M4 11h6" stroke="#111" />
            <circle cx="16" cy="16" r="7.500" fill="#222" stroke="#777" />
            <text x="16" y="20" textAnchor="middle" fontSize="11" fontWeight="700" fill="#fff">1</text>
          </svg>
        </button>
        <span className="mr-1 h-full w-px bg-[#555]" />
      </div>
    </footer>
  );
}

function StatusCell({ className, children }: { className: string; children: ReactNode }) {
  return <span className={clsx('flex items-center border border-[#d7d7d7] bg-[#f4f4f4] pl-px whitespace-nowrap', className)}>{children}</span>;
}

export default function App() {
  return (
    <div className="relative flex min-h-screen flex-col overflow-hidden bg-[#f0f0f0] font-['Open_Sans','Noto_Sans_CJK_SC',sans-serif] text-xs text-black">
      <header className="flex h-[23px] shrink-0 items-center bg-white text-[#8a8a8a]">
        <GgjLogo className="ml-0.5 size-4" />
        <h1 className="ml-[5px] flex-1 font-['Inter','Noto_Sans_CJK_SC',sans-serif] whitespace-nowrap">
          广联达BIM钢筋算量软件 GGJ2013 - [C:\Users\Administrator.PC-20141127NRHM\Desktop\白龙村-2018-02-02-19-24-35(2666版).GGJ12]
        </h1>
        <button type="button" aria-label="最小化" className="flex w-[46px] justify-center"><Minus className="size-3.5" strokeWidth={1.3} /></button>
        <button type="button" aria-label="还原" className="flex w-[46px] justify-center"><Copy className="size-3 -scale-x-100" strokeWidth={1.5} /></button>
        <button type="button" aria-label="关闭" className="flex w-[46px] justify-center"><X className="size-4" strokeWidth={1.3} /></button>
      </header>

      <div className="flex h-[30px] shrink-0 items-center gap-[3px]">
        <nav className="flex w-[780px] shrink-0 items-center justify-between pl-[7px] whitespace-nowrap">
          {menus.map((menu) => (
            <button key={menu} type="button">{menu}</button>
          ))}
        </nav>
        <div className="flex w-[151px] shrink-0">
          <Tools items={[{ icon: 'newChange', label: '新建变更', arrow: 'wide' }, { icon: 'mascot', label: '广小二' }]} />
        </div>
        <Group className="w-[187px] justify-center">
          <a href="#help" className="text-[#2f6410]">自动生成吊筋如何操作..</a>
        </Group>
        <Group className="min-w-0 flex-1">
          <Tools items={[{ icon: 'account', label: '13907298339', arrow: 'wide' }]} />
          <span className="ml-1 whitespace-nowrap">造价豆:0</span>
          <Icon name="bell" className="ml-2" />
          <More className="mr-[3px] ml-auto" />
        </Group>
      </div>

      <div className="flex h-[30px] shrink-0 items-center gap-[3px]">
        <Group className="w-[150px]">
          <Tools items={fileTools} />
          <More className="mr-px ml-auto" />
        </Group>
        <Group className="w-[549px]">
          <Tools items={modelTools} />
          <More className="mr-[3px] ml-auto" />
        </Group>
        <Group className="min-w-0 flex-1">
          <Combo label="视图模式" value="二维" icon="rect" className="w-[61px]" />
          <Tools items={viewTools} />
          <More className="mr-[3px] ml-auto" />
        </Group>
      </div>

      <div className="flex flex-1">
        <Sidebar />
        <main className="flex min-w-0 flex-1 flex-col">
          <div className="flex h-7 shrink-0">
            <Group className="pr-1">
              <Grip />
              <Tools items={editTools} />
            </Group>
          </div>
          <div className="flex h-7 shrink-0">
            <Group>
              <Grip />
              <div className="ml-0.5 flex gap-[3px]">
                <Combo label="楼层" value="首层" className="w-[57px]" />
                <Combo label="构件大类" value="梁" className="w-[69px]" />
                <Combo label="构件类型" value="梁" className="w-[69px]" />
                <Combo label="构件" value="KL-1A" className="w-[69px]" />
                <Combo label="分层" value="分层1" className="w-[69px]" />
              </div>
              <Tools items={memberTools} />
            </Group>
            <Group className="pr-1">
              <Grip />
              <Tools items={axisTools} />
            </Group>
          </div>
          <div className="flex h-[29px] shrink-0 gap-0.5">
            <Group className="min-w-0 flex-1">
              <Grip />
              <Tools items={[{ icon: 'cursor', label: '选择', active: true }]} />
              <button type="button" aria-label="选择方式" className="flex w-3 justify-center"><Caret /></button>
              <Tools items={drawTools} />
              <Combo label="绘制方式" value="" className="w-[57px]" />
              <Tools items={beamTools} />
              <More className="mr-[3px] ml-auto" />
            </Group>
            <Group className="w-[33px]">
              <Grip />
              <span className="h-full flex-1 bg-white" />
            </Group>
          </div>

          <div className="relative flex-1 overflow-hidden bg-black">
            <Drawing />
            <Dialog />
          </div>

          <div className="flex h-[31px] shrink-0 gap-1">
            <Group>
              <Grip />
              <Tools items={modeTools} />
            </Group>
            <Group>
              <Grip />
              <Tools items={snapTools} />
            </Group>
            <Group className="pr-1">
              <Grip />
              <Combo label="偏移方式" value="不偏移" className="w-[57px]" />
              <Separator />
              <span className="w-5 pl-px text-[#808080]">X=</span>
              <Spin label="X 偏移" value="0" className="w-[58px]" />
              <span className="w-7 pl-px text-[#808080]">mm</span>
              <span className="w-[18px] text-[#808080]">Y=</span>
              <Spin label="Y 偏移" value="0" className="w-[58px]" />
              <span className="w-[23px] pl-px text-[#808080]">mm</span>
              <Separator />
              <label className="ml-0.5 flex items-center gap-2">
                <input type="checkbox" className="size-3 appearance-none border border-[#a0a0a0] bg-white" />
                旋转
              </label>
              <Spin label="旋转角度" value="0.000" className="ml-1 w-[68px]" />
              <span className="ml-0.5 text-[#808080]">°</span>
            </Group>
          </div>
        </main>
      </div>

      <div className="flex h-[22px] shrink-0 gap-0.5 border-t border-white">
        <StatusCell className="w-[148px]"><Lat>X=21103 Y=10887</Lat></StatusCell>
        <StatusCell className="w-[78px]">层高<Lat>:4.5m</Lat></StatusCell>
        <StatusCell className="w-[98px]">底标高<Lat>:-0.05m</Lat></StatusCell>
        <StatusCell className="w-12"><Lat>0</Lat></StatusCell>
        <StatusCell className="min-w-0 flex-1">按鼠标左键指定第一个角点，或拾取构件图元</StatusCell>
        <StatusCell className="w-[70px]"><Lat>358.7 FPS</Lat></StatusCell>
      </div>

      <Taskbar />

      <InputMethodBar />
      <span className="pointer-events-none absolute top-[220px] left-[414px] h-[59px] w-[203px] border-7 border-[#0000fe]" />
      <span className="pointer-events-none absolute top-[400px] left-[430px] h-[57px] w-40 border-7 border-[#0000fe]" />
      <span className="pointer-events-none absolute top-[118px] right-0 h-[76px] w-[63px] border-7 border-r-4 border-[#0000fe]" />
    </div>
  );
}
